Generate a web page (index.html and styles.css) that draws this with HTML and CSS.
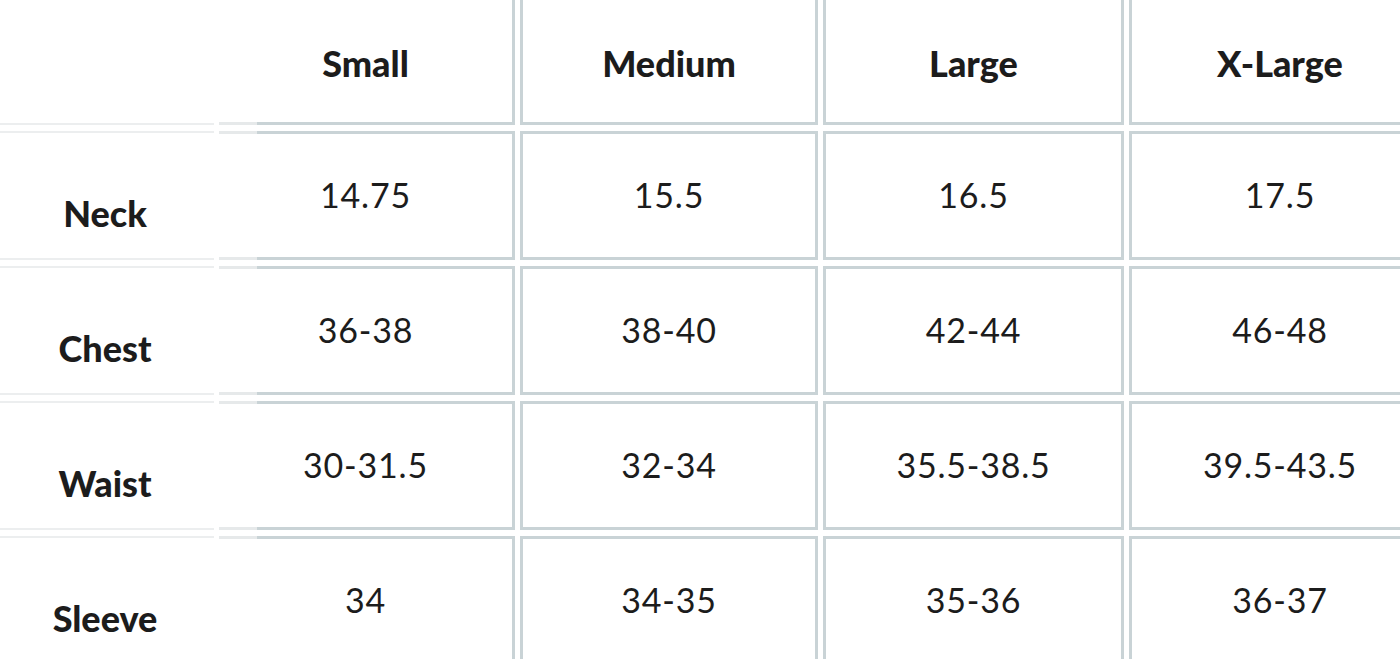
FILE: index.html
```html
<!DOCTYPE html>
<html lang="en">
<head>
<meta charset="utf-8">
<title>Size chart</title>
<link rel="stylesheet" href="styles.css">
</head>
<body>
<div class="chart">
  <div class="cell label-cell"></div>
  <div class="cell head first">Small</div>
  <div class="cell head">Medium</div>
  <div class="cell head">Large</div>
  <div class="cell head">X-Large</div>

  <div class="cell label-cell"><span class="label">Neck</span></div>
  <div class="cell val first">14.75</div>
  <div class="cell val">15.5</div>
  <div class="cell val">16.5</div>
  <div class="cell val">17.5</div>

  <div class="cell label-cell"><span class="label">Chest</span></div>
  <div class="cell val first">36-38</div>
  <div class="cell val">38-40</div>
  <div class="cell val">42-44</div>
  <div class="cell val">46-48</div>

  <div class="cell label-cell"><span class="label">Waist</span></div>
  <div class="cell val first">30-31.5</div>
  <div class="cell val">32-34</div>
  <div class="cell val">35.5-38.5</div>
  <div class="cell val">39.5-43.5</div>

  <div class="cell label-cell"><span class="label">Sleeve</span></div>
  <div class="cell val first">34</div>
  <div class="cell val">34-35</div>
  <div class="cell val">35-36</div>
  <div class="cell val">36-37</div>
</div>
</body>
</html>
```

FILE: styles.css
```css
html, body {
  margin: 0;
  padding: 0;
  background: #ffffff;
  overflow: hidden;
}

body {
  width: 1400px;
  height: 659px;
  font-family: Lato, "Open Sans", sans-serif;
  color: #1c1c1c;
}

.chart {
  display: grid;
  grid-template-columns: 218px 296px 298px 301px 302px;
  grid-template-rows: repeat(5, 129px);
  column-gap: 5px;
  row-gap: 6px;
  margin-top: -4px;
  margin-left: -4px;
}

.cell {
  box-sizing: border-box;
  display: flex;
  align-items: center;
  justify-content: center;
  border: 3px solid #c9d3d6;
}

.cell.first {
  border-left: none;
  border-image: linear-gradient(to right, #e6e9ea 41px, #c9d3d6 41px) 3;
}

.label-cell {
  border: none;
  border-top: 2px solid #eceeef;
  border-bottom: 2px solid #eceeef;
}

.chart > .label-cell:first-child {
  border-top: none;
}

.head {
  font-weight: 900;
  font-size: 36px;
  padding-top: 4px;
}

.val {
  font-weight: 400;
  font-size: 34px;
  letter-spacing: 0.8px;
  padding-bottom: 2px;
}

.label {
  font-weight: 900;
  font-size: 36px;
  padding-top: 34px;
}
```
